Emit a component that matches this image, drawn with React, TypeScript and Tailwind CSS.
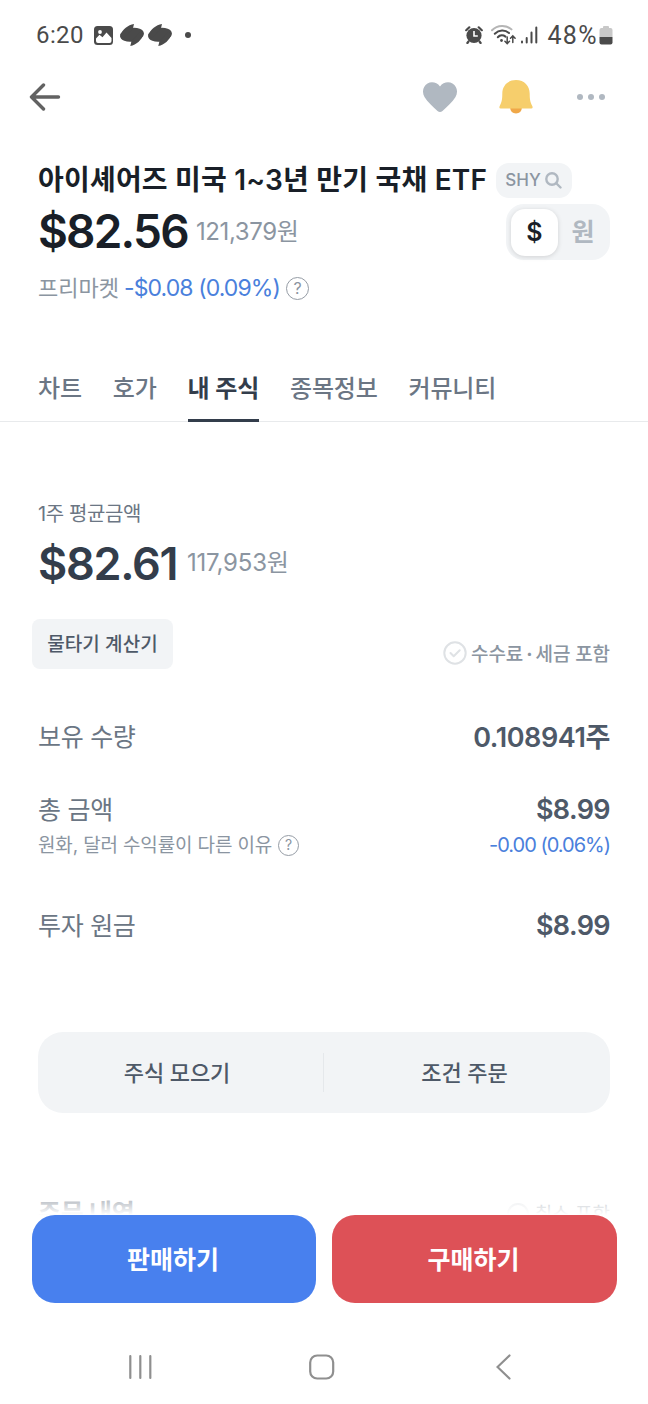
import { clsx } from "clsx"

const tabs = [
  { label: "차트", active: false },
  { label: "호가", active: false },
  { label: "내 주식", active: true },
  { label: "종목정보", active: false },
  { label: "커뮤니티", active: false },
]

function StatusBar() {
  return (
    <div className="flex h-[70px] items-center justify-between pl-[35px] pr-[35px] text-[#4a4a4a]">
      <div className="flex items-center">
        <span className="w-[59px] pl-[1px] font-[Roboto] text-[24px] leading-none tracking-[0.4px]">6:20</span>
        <svg width="20" height="19" viewBox="0 0 20 19" fill="none">
          <rect width="19" height="19" rx="3.5" fill="currentColor" />
          <circle cx="6" cy="6" r="1.9" fill="#fff" />
          <path d="M2 15v-2.500l3.500-3.800 3 2.600 4-4.800 5 5.500v3q0 2-2 2H4q-2 0-2-2Z" fill="#fff" />
        </svg>
        <SwirlIcon className="ml-[6px]" />
        <SwirlIcon className="ml-[4px]" />
        <span className="ml-[13px] size-[6px] rounded-full bg-[#4a4a4a]" />
      </div>
      <div className="flex items-center">
        <svg width="18" height="18" viewBox="0 0 18 18" fill="none">
          <circle cx="9" cy="9.5" r="7.6" fill="currentColor" />
          <path d="M1.2 4.2 4.3 1.3M16.8 4.2 13.7 1.3M3.5 15.5 2.4 17M14.5 15.5l1.1 1.5" stroke="currentColor" strokeWidth="2.2" strokeLinecap="round" />
          <path d="M9 5v5h3.8" stroke="#fff" strokeWidth="1.6" />
        </svg>
        <svg className="ml-[8px]" width="26" height="22" viewBox="0 0 26 22" fill="none" strokeLinecap="round">
          <path d="M1 6.2C6.5.6 15.5.6 20.5 5.4" stroke="#b5b5b5" strokeWidth="2" />
          <path d="M3.8 9.8C8 5.6 14 5.6 18 9" stroke="currentColor" strokeWidth="2" />
          <path d="M6.8 13.2C9 10.8 12.2 10.8 14.5 12.6" stroke="currentColor" strokeWidth="2" />
          <circle cx="10.5" cy="16.5" r="1.4" fill="currentColor" />
          <path d="M16.2 13v6.5m-2.3-2.2 2.3 2.3 2.3-2.3M21.8 18.5V12m-2.3 2.2 2.3-2.3 2.3 2.3" stroke="currentColor" strokeWidth="1.5" />
        </svg>
        <svg className="ml-[3px]" width="18" height="18" viewBox="0 0 18 18" stroke="currentColor" strokeWidth="2" strokeLinecap="round">
          <path d="M2 15.5v1M6.7 12v4.5M11.5 6.5v10M16.3 1.5v15" />
        </svg>
        <span className="ml-[9px] font-[Roboto] text-[25px] leading-none tracking-[1.4px]">48%</span>
        <svg className="ml-[1px]" width="14" height="19" viewBox="0 0 13 19">
          <path d="M3.5 2V1q0-1 1-1h4q1 0 1 1v1H11q2 0 2 2v7H0V4q0-2 2-2Z" fill="#c8c8c8" />
          <path d="M0 11h13v5.5q0 2-2 2H2q-2 0-2-2Z" fill="currentColor" />
        </svg>
      </div>
    </div>
  )
}

function SwirlIcon({ className }: { className?: string }) {
  return (
    <svg className={className} width="24" height="22" viewBox="0 0 24 22" fill="currentColor">
      <ellipse cx="12" cy="10.8" rx="12" ry="6.8" transform="rotate(-8 12 10.8)" />
      <path d="M14 0 12.800 5 4 14 .5 11C2.500 5.500 8 1 14 0ZM10.300 22l1.200-5L20 8l3.300 2.500C21.500 16 16.500 21 10.300 22Z" />
    </svg>
  )
}

function Help({ className }: { className?: string }) {
  return (
    <span
      className={clsx(
        "flex items-center justify-center rounded-full border-[1.5px] border-[#959ca5] leading-none text-[#8b95a1]",
        className,
      )}
    >
      ?
    </span>
  )
}

function Header() {
  return (
    <div className="flex h-[54px] items-center justify-between pl-[29px] pr-[43px]">
      <svg width="32" height="28" viewBox="0 0 32 28" fill="none" stroke="#626262" strokeWidth="3.4" strokeLinecap="round" strokeLinejoin="round">
        <path d="M14.5 2 2.5 14l12 12M2.5 14h27" />
      </svg>
      <div className="flex items-center">
        <svg width="34" height="30" viewBox="0 0 34 30" fill="#b0b8c1">
          <path d="M17 4.5C20 .3 25.5-.8 29.5 1.5c4.8 2.8 5.7 9 3 13.5-3 5-8.5 9.8-13 13.9q-2.5 2.1-5 0C10 24.8 4.5 20 1.5 15-1.2 10.5-.3 4.3 4.5 1.5 8.5-.8 14 .3 17 4.5Z" />
        </svg>
        <svg className="ml-[42px]" width="34" height="36" viewBox="0 0 34 36">
          <path d="M11 28h12q-.5 6.5-6 6.5T11 28Z" fill="#f0a848" />
          <path d="M17 1C8.5 1 3.3 7 3.3 14.5c0 7-.8 9-2.6 12.5q-1 2.5 1 2.5h30.6q2 0 1-2.5c-1.8-3.5-2.6-5.5-2.6-12.5C30.7 7 25.5 1 17 1Z" fill="#f6ce6c" />
        </svg>
        <div className="ml-[44px] flex gap-[5px]">
          <span className="size-[6px] rounded-full bg-[#b0b8c1]" />
          <span className="size-[6px] rounded-full bg-[#b0b8c1]" />
          <span className="size-[6px] rounded-full bg-[#b0b8c1]" />
        </div>
      </div>
    </div>
  )
}

function StockSummary() {
  return (
    <div className="mt-[39px] px-[38px]">
      <div className="flex h-[34px] items-center">
        <h1 className="w-[458px] whitespace-nowrap text-[28px] font-semibold leading-none tracking-[0.2px] text-[#191f28]">
          아이셰어즈 미국 1~3년 만기 국채 ETF
        </h1>
        <button className="flex h-[35px] w-[76px] items-center justify-center gap-[4px] rounded-[13px] bg-[#f2f4f6] pr-[1px] text-[17px] font-medium leading-none text-[#8b95a1]">
          SHY
          <svg width="17" height="17" viewBox="0 0 17 17" fill="none" stroke="#b0b8c1" strokeWidth="2.4" strokeLinecap="round">
            <circle cx="7" cy="7" r="5.7" />
            <path d="m11.5 11.5 4 4" />
          </svg>
        </button>
      </div>
      <div className="flex h-[68px] items-center">
        <span className="w-[157px] text-[46px] font-semibold leading-none tracking-[-1.8px] text-[#191f28]">$82.56</span>
        <span className="pl-[1px] pt-[1px] text-[24px] leading-none tracking-[-0.4px] text-[#8b95a1]">121,379원</span>
        <div className="ml-auto mt-[2px] flex h-[56px] w-[104px] items-center rounded-[18px] bg-[#f2f4f6] pl-[5px] text-[25px] font-semibold leading-none">
          <span className="flex size-[47px] items-center justify-center rounded-[14px] bg-white text-[#191f28] shadow-[0_1px_5px_rgba(0,0,0,0.14)]">$</span>
          <span className="flex flex-1 justify-center pr-[2px] text-[#b0b8c1]">원</span>
        </div>
      </div>
      <div className="flex h-[46px] items-center text-[23px] leading-none">
        <span className="w-[86px] text-[22px] text-[#8b95a1]">프리마켓</span>
        <span className="w-[162px] whitespace-nowrap tracking-[-0.9px] text-[#4a80dc]">-$0.08 (0.09%)</span>
        <Help className="size-[23px] text-[16px]" />
      </div>
    </div>
  )
}

function Tabs() {
  return (
    <div className="mt-[45px] flex h-[66px] gap-[31px] border-b border-[#e8eaec] pl-[38px] text-[24px] leading-none tracking-[-0.2px]">
      {tabs.map((tab) => (
        <div
          key={tab.label}
          className={clsx(
            "flex h-[66px] items-center border-b-[3px] pt-[3px]",
            tab.active ? "border-[#333d4b] font-semibold text-[#333d4b]" : "border-transparent font-medium text-[#6b7684]",
          )}
        >
          {tab.label}
        </div>
      ))}
    </div>
  )
}

function Holdings() {
  return (
    <div className="mt-[78px] px-[38px]">
      <div className="flex h-[28px] items-center text-[20px] leading-none tracking-[-0.4px] text-[#6b7684]">1주 평균금액</div>
      <div className="flex h-[72px] items-center pb-[2px]">
        <span className="w-[149px] text-[45px] font-semibold leading-none tracking-[-1.3px] text-[#333d4b]">$82.61</span>
        <span className="text-[24px] leading-none tracking-[-0.2px] text-[#8b95a1]">117,953원</span>
      </div>
      <div className="-ml-[6px] mt-[19px] flex h-[50px] items-start justify-between">
        <button className="h-[50px] w-[141px] rounded-[8px] bg-[#f2f4f6] text-[19px] font-medium leading-none tracking-[0.1px] text-[#4e5968]">
          물타기 계산기
        </button>
        <div className="mt-[22px] flex items-center gap-[4px] text-[19px] font-medium leading-none tracking-[-0.1px] text-[#8b95a1]">
          <svg width="24" height="24" viewBox="0 0 24 24" fill="none" stroke="#dfe2e5" strokeWidth="2" strokeLinecap="round" strokeLinejoin="round">
            <circle cx="12" cy="12" r="10.7" />
            <path d="m7.5 12 3.2 3.2 6-6" />
          </svg>
          <span className="pt-[2px]">
            수수료<span className="mx-[3px] font-bold">·</span>세금 포함
          </span>
        </div>
      </div>

      <div className="mt-[48px] flex h-[40px] items-center justify-between leading-none">
        <span className="text-[25px] tracking-[-0.3px] text-[#6b7684]">보유 수량</span>
        <span className="text-[27px] font-semibold tracking-[-0.4px] text-[#4e5968]">0.108941주</span>
      </div>
      <div className="mt-[32px] flex h-[40px] items-center justify-between leading-none">
        <span className="pt-[2px] text-[25px] tracking-[-0.3px] text-[#6b7684]">총 금액</span>
        <span className="text-[27px] font-semibold tracking-[-0.6px] text-[#4e5968]">$8.99</span>
      </div>
      <div className="mt-[2px] flex h-[28px] items-center leading-none">
        <span className="w-[240px] whitespace-nowrap pt-[1px] text-[19px] tracking-[-0.15px] text-[#8b95a1]">원화, 달러 수익률이 다른 이유</span>
        <Help className="size-[21px] text-[14px]" />
        <span className="ml-auto text-[20px] tracking-[-1px] text-[#4a80dc]">-0.00 (0.06%)</span>
      </div>
      <div className="mt-[46px] flex h-[40px] items-center justify-between leading-none">
        <span className="pt-[2px] text-[25px] tracking-[-0.3px] text-[#6b7684]">투자 원금</span>
        <span className="text-[27px] font-semibold tracking-[-0.6px] text-[#4e5968]">$8.99</span>
      </div>

      <div className="mt-[87px] flex h-[81px] items-center rounded-[25px] bg-[#f2f4f6] text-[22px] font-medium leading-none tracking-[-0.1px] text-[#4e5968]">
        <span className="w-[285px] pr-[7px] text-center">주식 모으기</span>
        <span className="h-[39px] w-px bg-[#e5e8eb]" />
        <span className="flex-1 pr-[5px] text-center">조건 주문</span>
      </div>
    </div>
  )
}

function BottomActions() {
  return (
    <div>
      {/* Next section, fading out behind the buttons */}
      <div className="relative mt-[76px] flex h-[26px] items-start justify-between overflow-hidden px-[38px] pt-[12px] leading-none">
        <span className="text-[25px] font-bold tracking-[-0.3px] text-[#6b7684]">주문 내역</span>
        <span className="flex items-center gap-[6px] pt-[2px] text-[19px] text-[#8b95a1]">
          <span className="size-[22px] rounded-full border-2 border-[#dfe2e5]" />
          취소 포함
        </span>
        <div className="absolute inset-0 bg-gradient-to-b from-white/40 via-white/60 to-white" />
      </div>
      <div className="flex h-[88px] gap-[16px] pl-[32px] pr-[31px] text-[25px] font-semibold leading-none text-white">
        <button className="w-[284px] rounded-[23px] bg-[#4880ee] pr-[2px] pt-[2px]">판매하기</button>
        <button className="flex-1 rounded-[23px] bg-[#dd5157] pr-[2px] pt-[2px]">구매하기</button>
      </div>
    </div>
  )
}

function NavBar() {
  return (
    <div className="mt-[51px] flex h-[26px] items-center pl-[128px] text-[#8f8f8f]">
      <svg width="25" height="26" viewBox="0 0 25 26" stroke="currentColor" strokeWidth="2.2" strokeLinecap="round">
        <path d="M2.3 2v22M12.3 2v22M22.3 2v22" />
      </svg>
      <svg className="ml-[156px]" width="26" height="26" viewBox="0 0 26 26" fill="none" stroke="currentColor" strokeWidth="2.2">
        <rect x="1.2" y="1.5" width="23" height="23" rx="7" />
      </svg>
      <svg className="ml-[161px]" width="16" height="26" viewBox="0 0 16 26" fill="none" stroke="currentColor" strokeWidth="2.2" strokeLinecap="round">
        <path d="M13.5 1.5 1.5 13l12 11.5" />
      </svg>
    </div>
  )
}

export default function App() {
  return (
    <div className="h-[1404px] w-[648px] overflow-hidden bg-white font-['Inter','Noto_Sans_CJK_KR',sans-serif]">
      <StatusBar />
      <Header />
      <StockSummary />
      <Tabs />
      <Holdings />
      <BottomActions />
      <NavBar />
    </div>
  )
}
